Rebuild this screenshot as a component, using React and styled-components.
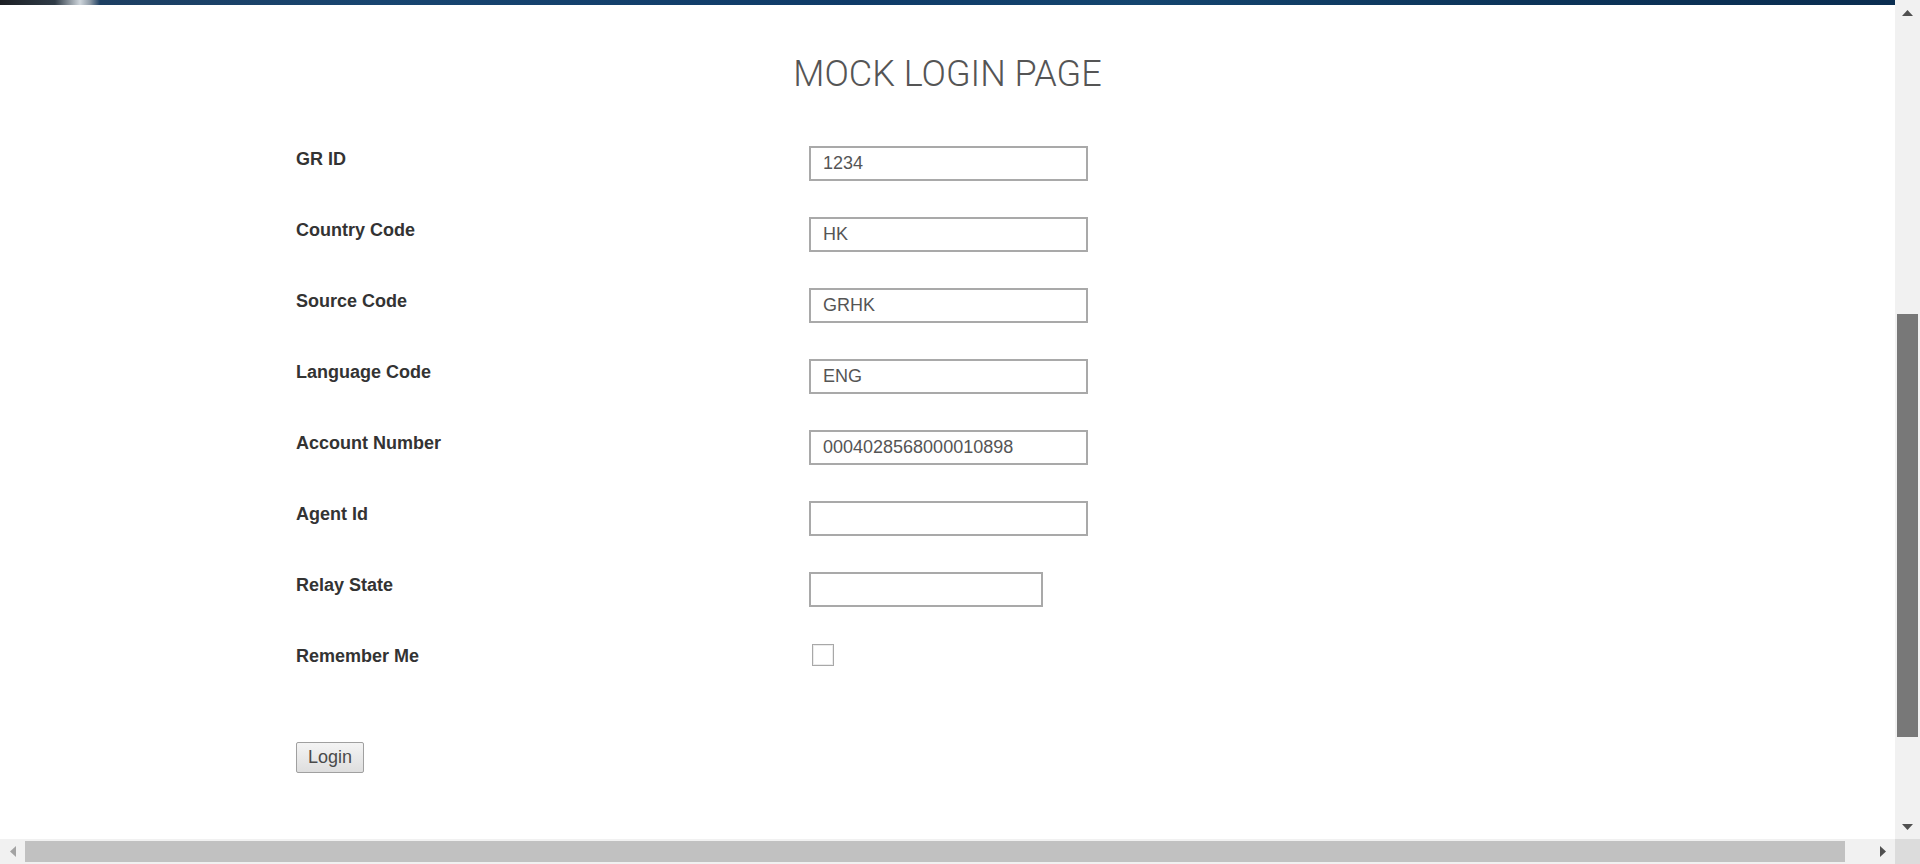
import React from "react";
import styled, { createGlobalStyle } from "styled-components";

const GlobalStyle = createGlobalStyle`
  html, body {
    margin: 0;
    padding: 0;
    height: 100%;
    overflow: hidden;
    background: #ffffff;
    font-family: "Liberation Sans", Arial, sans-serif;
  }
  #root { height: 100%; }
`;

const Viewport = styled.div`
  display: grid;
  grid-template-columns: 1fr 25px;
  grid-template-rows: 1fr 25px;
  width: 100vw;
  height: 100vh;
  overflow: hidden;
`;

const Page = styled.main`
  display: flex;
  flex-direction: column;
  overflow: hidden;
  background: #ffffff;
`;

const HeaderBand = styled.div`
  height: 5px;
  flex: none;
  background: linear-gradient(
    90deg,
    #1c1f24 0px,
    #2f3b47 55px,
    #cfd6dc 80px,
    #8e9aa6 90px,
    #1d3f62 100px,
    #184570 20%,
    #0f3b68 45%,
    #14456f 60%,
    #0c3459 80%,
    #0a2d50 100%
  );
`;

const Title = styled.h1`
  margin: 49px 0 0;
  text-align: center;
  font-family: Roboto, "Liberation Sans", sans-serif;
  font-weight: 300;
  font-size: 36px;
  line-height: 40px;
  color: #555555;
`;

const Container = styled.div`
  width: 1303px;
  margin: 52px auto 0;
`;

const FormGrid = styled.div`
  display: grid;
  grid-template-columns: 513px 1fr;
  row-gap: 36px;
  align-items: start;
`;

const Label = styled.label`
  padding-top: 3px;
  font-size: 18px;
  font-weight: 700;
  color: #333333;
  line-height: 20px;
`;

const TextInput = styled.input`
  box-sizing: border-box;
  width: ${(p) => p.$width}px;
  height: 35px;
  margin: 0;
  padding: 0 12px;
  border: 2px solid #a9a9a9;
  border-radius: 0;
  background: #ffffff;
  font-family: "Liberation Sans", Arial, sans-serif;
  font-size: 18px;
  color: #555555;
  outline: none;
`;

const Checkbox = styled.input`
  appearance: none;
  -webkit-appearance: none;
  box-sizing: border-box;
  width: 22px;
  height: 22px;
  margin: 1px 0 0 3px;
  border: 1px solid #a8a8a8;
  box-shadow: inset 0 0 0 1px #ececec;
  background: #ffffff;
  border-radius: 0;
`;

const ButtonRow = styled.div`
  display: flex;
  margin-top: 72px;
`;

const LoginButton = styled.button`
  box-sizing: border-box;
  width: 68px;
  height: 31px;
  padding: 0;
  border: 1px solid #a0a0a0;
  border-radius: 2px;
  background: linear-gradient(#f4f4f4, #dedede);
  font-family: "Liberation Sans", Arial, sans-serif;
  font-size: 18px;
  color: #4a4a4a;
`;

/* ---- fake browser scrollbars ---- */

const VTrack = styled.div`
  background: #f1f1f1;
  display: grid;
  grid-template-rows: 25px 1fr 25px;
  justify-items: center;
  align-items: center;
`;

const HTrack = styled.div`
  background: #f1f1f1;
  display: grid;
  grid-template-columns: 25px 1fr 25px;
  justify-items: center;
  align-items: center;
`;

const Corner = styled.div`
  background: #dcdcdc;
`;

const VThumbArea = styled.div`
  align-self: stretch;
  width: 21px;
  display: flex;
  flex-direction: column;
`;

const VThumb = styled.div`
  margin-top: 289px;
  height: 423px;
  background: #787878;
`;

const HThumb = styled.div`
  justify-self: stretch;
  height: 21px;
  margin-right: 25px;
  background: #c1c1c1;
`;

const Arrow = styled.svg`
  display: block;
  fill: ${(p) => p.$color};
`;

function ScrollArrow({ dir, color }) {
  if (dir === "up")
    return (
      <Arrow $color={color} width="11" height="6" viewBox="0 0 11 6">
        <polygon points="5.5,0 11,6 0,6" />
      </Arrow>
    );
  if (dir === "down")
    return (
      <Arrow $color={color} width="11" height="6" viewBox="0 0 11 6">
        <polygon points="0,0 11,0 5.5,6" />
      </Arrow>
    );
  if (dir === "left")
    return (
      <Arrow $color={color} width="6" height="11" viewBox="0 0 6 11">
        <polygon points="6,0 6,11 0,5.5" />
      </Arrow>
    );
  return (
    <Arrow $color={color} width="6" height="11" viewBox="0 0 6 11">
      <polygon points="0,0 6,5.5 0,11" />
    </Arrow>
  );
}

const fields = [
  { label: "GR ID", value: "1234", width: 279 },
  { label: "Country Code", value: "HK", width: 279 },
  { label: "Source Code", value: "GRHK", width: 279 },
  { label: "Language Code", value: "ENG", width: 279 },
  { label: "Account Number", value: "0004028568000010898", width: 279 },
  { label: "Agent Id", value: "", width: 279 },
  { label: "Relay State", value: "", width: 234 },
];

export default function App() {
  return (
    <>
      <GlobalStyle />
      <Viewport>
        <Page>
          <HeaderBand />
          <Title>MOCK LOGIN PAGE</Title>
          <Container>
            <FormGrid>
              {fields.map((f) => (
                <React.Fragment key={f.label}>
                  <Label>{f.label}</Label>
                  <div>
                    <TextInput
                      type="text"
                      $width={f.width}
                      defaultValue={f.value}
                      readOnly
                    />
                  </div>
                </React.Fragment>
              ))}
              <Label>Remember Me</Label>
              <div>
                <Checkbox type="checkbox" />
              </div>
            </FormGrid>
            <ButtonRow>
              <LoginButton type="button">Login</LoginButton>
            </ButtonRow>
          </Container>
        </Page>
        <VTrack>
          <ScrollArrow dir="up" color="#505050" />
          <VThumbArea>
            <VThumb />
          </VThumbArea>
          <ScrollArrow dir="down" color="#505050" />
        </VTrack>
        <HTrack>
          <ScrollArrow dir="left" color="#a3a3a3" />
          <HThumb />
          <ScrollArrow dir="right" color="#505050" />
        </HTrack>
        <Corner />
      </Viewport>
    </>
  );
}
